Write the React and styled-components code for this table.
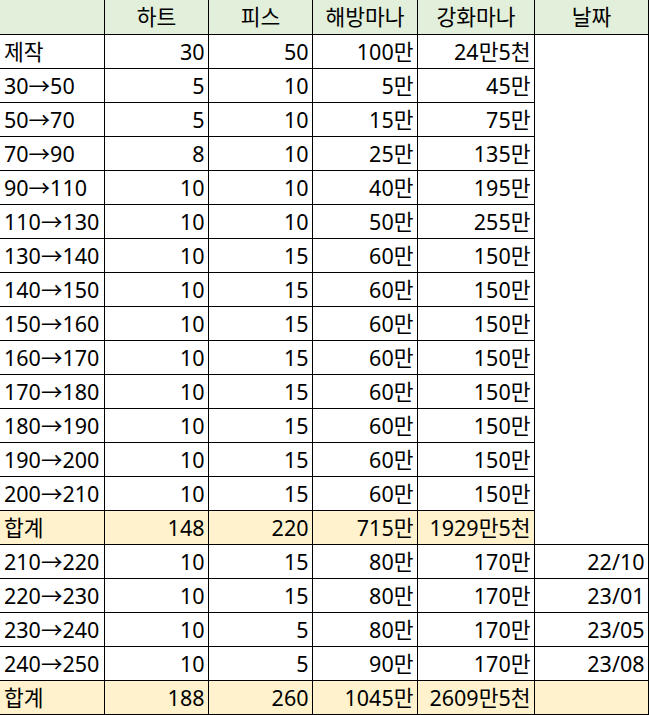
import React from "react";
import styled, { createGlobalStyle } from "styled-components";

const Global = createGlobalStyle`
  html, body { margin: 0; padding: 0; background: #fff; }
  body { font-family: "Noto Sans", "Noto Sans CJK KR", sans-serif; }
`;

const Sheet = styled.table`
  border-collapse: collapse;
  table-layout: fixed;
  width: 648px;
  font-family: "Noto Sans", "Noto Sans CJK KR", sans-serif;
  font-size: 21.5px;
  color: #000;
`;

const Col = styled.col`
  width: ${(p) => p.$w}px;
`;

const Row = styled.tr`
  height: 34px;
  background: ${(p) => (p.$kind === "head" ? "#e2efda" : p.$kind === "sum" ? "#fff2cc" : "#fff")};
`;

const Cell = styled.td`
  box-sizing: border-box;
  height: 34px;
  padding: 0 3px 0 4px;
  border-right: 1px solid #000;
  border-bottom: 1px solid #000;
  line-height: 33px;
  white-space: nowrap;
  overflow: hidden;
  vertical-align: middle;
  text-align: ${(p) => p.$align || "right"};
  background: ${(p) => p.$bg || "transparent"};
`;

const HeadCell = styled(Cell).attrs({ as: "th" })`
  font-weight: normal;
  text-align: center;
`;

const first = [
  ["제작", "30", "50", "100만", "24만5천"],
  ["30→50", "5", "10", "5만", "45만"],
  ["50→70", "5", "10", "15만", "75만"],
  ["70→90", "8", "10", "25만", "135만"],
  ["90→110", "10", "10", "40만", "195만"],
  ["110→130", "10", "10", "50만", "255만"],
  ["130→140", "10", "15", "60만", "150만"],
  ["140→150", "10", "15", "60만", "150만"],
  ["150→160", "10", "15", "60만", "150만"],
  ["160→170", "10", "15", "60만", "150만"],
  ["170→180", "10", "15", "60만", "150만"],
  ["180→190", "10", "15", "60만", "150만"],
  ["190→200", "10", "15", "60만", "150만"],
  ["200→210", "10", "15", "60만", "150만"],
];
const sum1 = ["합계", "148", "220", "715만", "1929만5천"];
const second = [
  ["210→220", "10", "15", "80만", "170만", "22/10"],
  ["220→230", "10", "15", "80만", "170만", "23/01"],
  ["230→240", "10", "5", "80만", "170만", "23/05"],
  ["240→250", "10", "5", "90만", "170만", "23/08"],
];
const sum2 = ["합계", "188", "260", "1045만", "2609만5천", ""];

const widths = [104, 104, 104, 105, 117, 114];

function DataCells({ cells }) {
  return cells.map((c, i) => (
    <Cell key={i} $align={i === 0 ? "left" : "right"}>
      {c}
    </Cell>
  ));
}

export default function App() {
  return (
    <>
      <Global />
      <Sheet>
        <colgroup>
          {widths.map((w, i) => (
            <Col key={i} $w={w} />
          ))}
        </colgroup>
        <thead>
          <Row $kind="head">
            <HeadCell />
            <HeadCell>하트</HeadCell>
            <HeadCell>피스</HeadCell>
            <HeadCell>해방마나</HeadCell>
            <HeadCell>강화마나</HeadCell>
            <HeadCell>날짜</HeadCell>
          </Row>
        </thead>
        <tbody>
          {first.map((r, i) => (
            <Row key={i}>
              <DataCells cells={r} />
              {i === 0 && <Cell rowSpan={15} $bg="#fff" />}
            </Row>
          ))}
          <Row $kind="sum">
            <DataCells cells={sum1} />
          </Row>
          {second.map((r, i) => (
            <Row key={i}>
              <DataCells cells={r} />
            </Row>
          ))}
          <Row $kind="sum">
            <DataCells cells={sum2} />
          </Row>
        </tbody>
      </Sheet>
    </>
  );
}
